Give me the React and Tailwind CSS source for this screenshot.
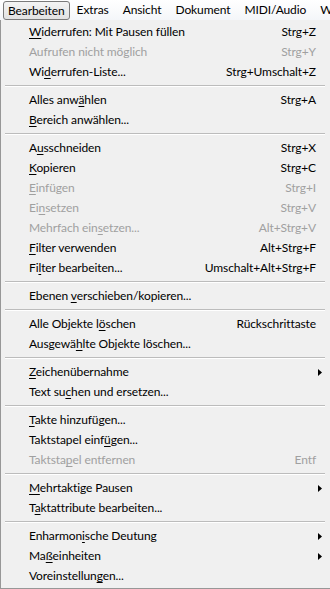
const font = { fontFamily: 'Lato, "Noto Sans", sans-serif' };

const menuBar = ['Bearbeiten', 'Extras', 'Ansicht', 'Dokument', 'MIDI/Audio', 'W'];

const items = [
  { label: 'Widerrufen: Mit Pausen füllen', u: 0, key: 'Strg+Z' },
  { label: 'Aufrufen nicht möglich', u: -1, key: 'Strg+Y', off: true },
  { label: 'Widerrufen-Liste...', u: 2, key: 'Strg+Umschalt+Z' },
  'sep',
  { label: 'Alles anwählen', u: 9, key: 'Strg+A' },
  { label: 'Bereich anwählen...', u: 0 },
  'sep',
  { label: 'Ausschneiden', u: 1, key: 'Strg+X' },
  { label: 'Kopieren', u: 0, key: 'Strg+C' },
  { label: 'Einfügen', u: 0, key: 'Strg+I', off: true },
  { label: 'Einsetzen', u: 2, key: 'Strg+V', off: true },
  { label: 'Mehrfach einsetzen...', u: 12, key: 'Alt+Strg+V', off: true },
  { label: 'Filter verwenden', u: 0, key: 'Alt+Strg+F' },
  { label: 'Filter bearbeiten...', u: 2, key: 'Umschalt+Alt+Strg+F' },
  'sep',
  { label: 'Ebenen verschieben/kopieren...', u: 7 },
  'sep',
  { label: 'Alle Objekte löschen', u: 14, key: 'Rückschrittaste' },
  { label: 'Ausgewählte Objekte löschen...', u: 7 },
  'sep',
  { label: 'Zeichenübernahme', u: 0, sub: true },
  { label: 'Text suchen und ersetzen...', u: 7 },
  'sep',
  { label: 'Takte hinzufügen...', u: 0 },
  { label: 'Taktstapel einfügen...', u: 15 },
  { label: 'Taktstapel entfernen', u: 7, key: 'Entf', off: true },
  'sep',
  { label: 'Mehrtaktige Pausen', u: 0, sub: true },
  { label: 'Taktattribute bearbeiten...', u: 1 },
  'sep',
  { label: 'Enharmonische Deutung', u: 8, sub: true },
  { label: 'Maßeinheiten', u: 2, sub: true },
  { label: 'Voreinstellungen...', u: 13 },
];

function Label({ text, u }) {
  if (u < 0) return <span>{text}</span>;
  return (
    <span>
      {text.slice(0, u)}
      <span className="underline decoration-1 underline-offset-2">{text[u]}</span>
      {text.slice(u + 1)}
    </span>
  );
}

function Row({ item }) {
  return (
    <div
      className={`flex items-center h-[20px] pl-[28px] pr-[14px] whitespace-nowrap ${
        item.off ? 'text-[#a0a0a0]' : 'text-black'
      }`}
    >
      <Label text={item.label} u={item.u} />
      <span className="ml-auto">{item.key}</span>
      {item.sub && (
        <svg width="4" height="7" viewBox="0 0 4 7" className="mr-[-6px]">
          <path d="M0 0 L4 3.5 L0 7 Z" fill="#000" />
        </svg>
      )}
    </div>
  );
}

export default function App() {
  return (
    <div
      className="w-[330px] h-[589px] overflow-hidden bg-[#f0f0f0] text-[12px] tracking-[-0.1px] leading-none"
      style={font}
    >
      <div className="flex items-center h-[20px] bg-gradient-to-b from-[#ffffff] to-[#f4f6f9] pl-[3px] whitespace-nowrap">
        {menuBar.map((m, i) => (
          <div
            key={m}
            className={
              i === 0
                ? 'h-[19px] mt-[1px] flex items-center px-[4px] border border-[#7a7a7a] rounded-[3px] bg-gradient-to-b from-[#f4f4f4] to-[#e2e2e2]'
                : 'h-[20px] flex items-center px-[7px]'
            }
          >
            {m}
          </div>
        ))}
      </div>
      <div className="border-l border-b border-[#979797] pt-[2px] h-[569px]">
        {items.map((it, i) =>
          it === 'sep' ? (
            <div key={i} className="h-[8px] flex items-center pl-[4px] pr-[5px]">
              <div className="w-full h-[2px] border-t border-[#bcbcbc] border-b border-b-white" />
            </div>
          ) : (
            <Row key={i} item={it} />
          )
        )}
      </div>
    </div>
  );
}
